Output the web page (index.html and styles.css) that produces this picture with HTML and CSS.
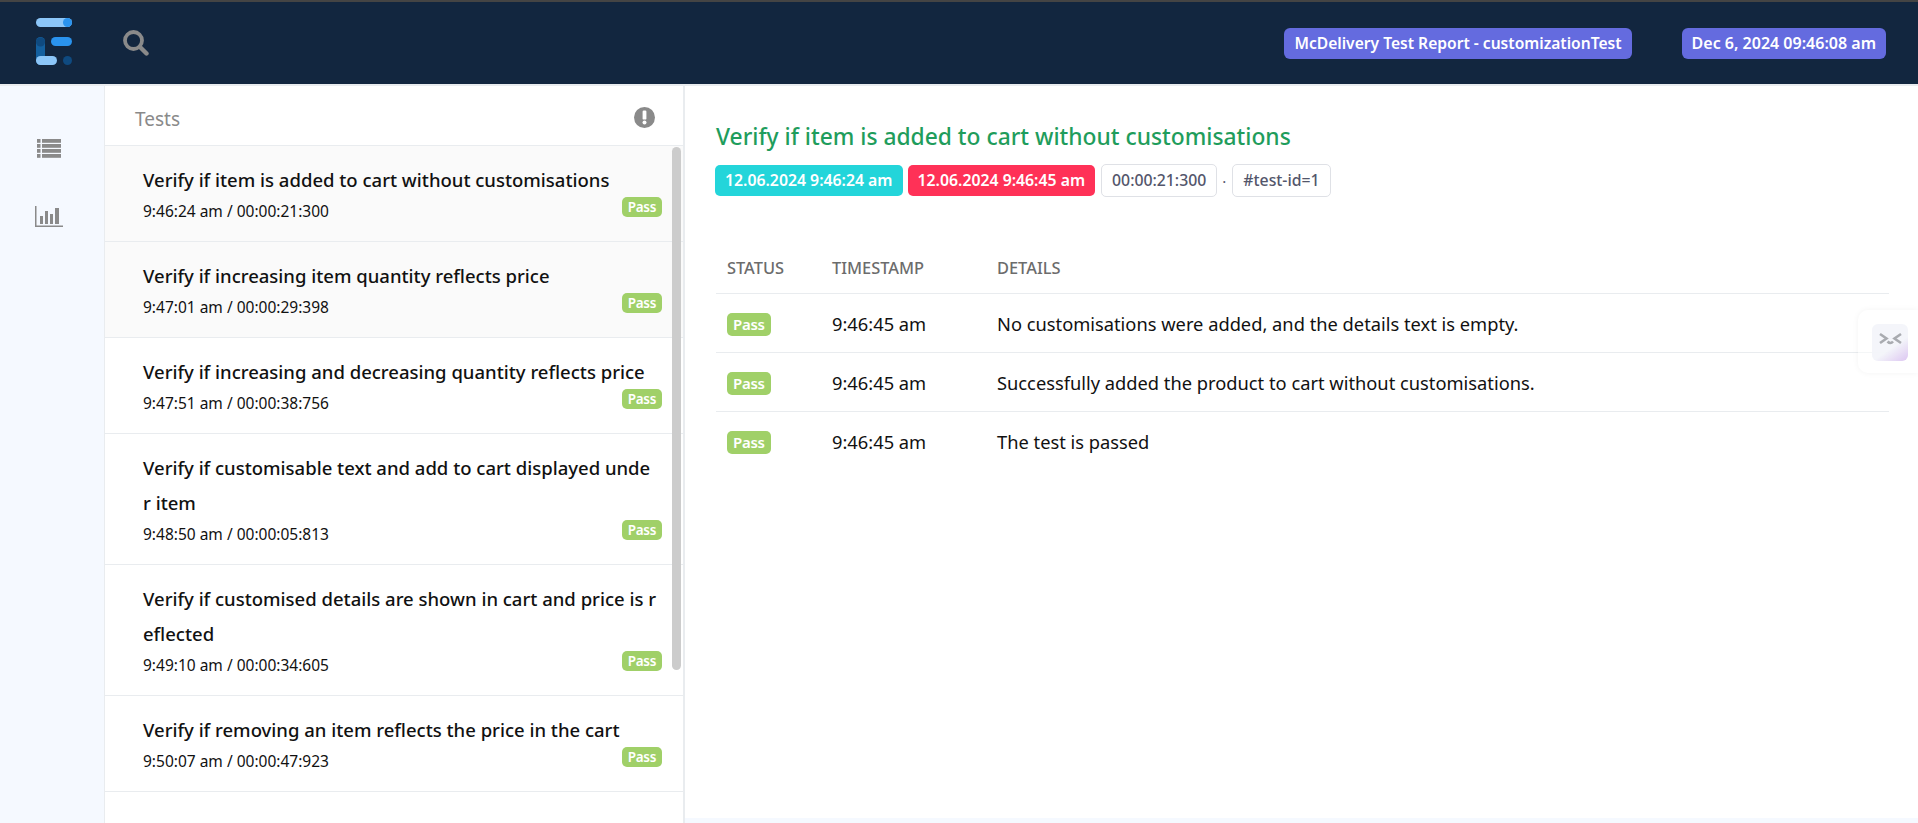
FILE: index.html
```html
<!DOCTYPE html>
<html>
<head>
<meta charset="utf-8">
<link rel="stylesheet" href="styles.css">
<title>McDelivery Test Report</title>
</head>
<body>
<nav class="topbar">
  <svg class="logo" width="38" height="50" viewBox="0 0 38 50">
    <rect x="0" y="1" width="36" height="9" rx="4.5" fill="#8cc6f8"/>
    <circle cx="31.5" cy="5.5" r="4.5" fill="#2a93ee"/>
    <rect x="0" y="20" width="9" height="28" rx="4.5" fill="#14609f"/>
    <circle cx="4.5" cy="25" r="4.5" fill="#0f4a80"/>
    <rect x="15" y="20" width="21" height="9" rx="4.5" fill="#2a93ee"/>
    <rect x="0" y="39" width="21" height="9" rx="4.5" fill="#8cc6f8"/>
    <circle cx="31.5" cy="43.5" r="4.5" fill="#0f4a80"/>
  </svg>
  <svg class="search" width="26" height="26" viewBox="0 0 26 26" fill="none" stroke="#8a8a8a">
    <circle cx="10.5" cy="10.5" r="8.5" stroke-width="3.8"/>
    <path d="M17 17l6.5 6.5" stroke-width="4.4" stroke-linecap="round"/>
  </svg>
  <div class="topbar-right">
    <span class="nav-badge">McDelivery Test Report - customizationTest</span>
    <span class="nav-badge nav-date">Dec 6, 2024 09:46:08 am</span>
  </div>
</nav>

<div class="main">
  <aside class="side">
    <svg width="24" height="19" viewBox="0 0 24 19" fill="#8a8a8a">
      <rect x="0" y="0" width="3.5" height="3.8"/><rect x="5" y="0" width="19" height="3.8"/>
      <rect x="0" y="5" width="3.5" height="3.8"/><rect x="5" y="5" width="19" height="3.8"/>
      <rect x="0" y="10" width="3.5" height="3.8"/><rect x="5" y="10" width="19" height="3.8"/>
      <rect x="0" y="15" width="3.5" height="3.8"/><rect x="5" y="15" width="19" height="3.8"/>
    </svg>
    <svg width="28" height="21" viewBox="0 0 28 21" fill="#8a8a8a">
      <rect x="0" y="0" width="1.5" height="21"/><rect x="0" y="19.5" width="28" height="1.5"/>
      <rect x="5" y="10" width="3" height="8"/><rect x="10" y="5" width="3" height="13"/>
      <rect x="15" y="8" width="3" height="10"/><rect x="20" y="2" width="4" height="16"/>
    </svg>
  </aside>

  <section class="tests">
    <header class="tests-head">
      <span class="tests-label">Tests</span>
      <svg width="21" height="21" viewBox="0 0 21 21">
        <circle cx="10.5" cy="10.5" r="10.5" fill="#8a8a8a"/>
        <rect x="8.6" y="3.6" width="3.8" height="9" rx="1.2" fill="#fff"/>
        <circle cx="10.5" cy="15.6" r="2" fill="#fff"/>
      </svg>
    </header>
    <ul class="test-list">
      <li class="test-item seen">
        <p class="test-name">Verify if item is added to cart without customisations</p>
        <p class="test-time">9:46:24 am / 00:00:21:300</p>
        <span class="pass">Pass</span>
      </li>
      <li class="test-item seen">
        <p class="test-name">Verify if increasing item quantity reflects price</p>
        <p class="test-time">9:47:01 am / 00:00:29:398</p>
        <span class="pass">Pass</span>
      </li>
      <li class="test-item">
        <p class="test-name">Verify if increasing and decreasing quantity reflects price</p>
        <p class="test-time">9:47:51 am / 00:00:38:756</p>
        <span class="pass">Pass</span>
      </li>
      <li class="test-item">
        <p class="test-name">Verify if customisable text and add to cart displayed under item</p>
        <p class="test-time">9:48:50 am / 00:00:05:813</p>
        <span class="pass">Pass</span>
      </li>
      <li class="test-item">
        <p class="test-name">Verify if customised details are shown in cart and price is reflected</p>
        <p class="test-time">9:49:10 am / 00:00:34:605</p>
        <span class="pass">Pass</span>
      </li>
      <li class="test-item">
        <p class="test-name">Verify if removing an item reflects the price in the cart</p>
        <p class="test-time">9:50:07 am / 00:00:47:923</p>
        <span class="pass">Pass</span>
      </li>
    </ul>
    <div class="scroll-thumb"></div>
  </section>

  <section class="detail">
    <div class="detail-inner">
      <h1 class="detail-title">Verify if item is added to cart without customisations</h1>
      <div class="detail-tags">
        <span class="tag tag-start">12.06.2024 9:46:24 am</span>
        <span class="tag tag-end">12.06.2024 9:46:45 am</span>
        <span class="tag tag-line">00:00:21:300</span>
        <span class="dot">·</span>
        <span class="tag tag-line">#test-id=1</span>
      </div>
      <table class="log">
        <thead>
          <tr><th class="col-status">Status</th><th class="col-time">Timestamp</th><th>Details</th></tr>
        </thead>
        <tbody>
          <tr><td><span class="pass">Pass</span></td><td>9:46:45 am</td><td>No customisations were added, and the details text is empty.</td></tr>
          <tr><td><span class="pass">Pass</span></td><td>9:46:45 am</td><td>Successfully added the product to cart without customisations.</td></tr>
          <tr><td><span class="pass">Pass</span></td><td>9:46:45 am</td><td>The test is passed</td></tr>
        </tbody>
      </table>
    </div>
    <div class="float-card">
      <div class="float-face">
        <svg width="36" height="36" viewBox="0 0 36 36" fill="none" stroke="#a0a2a8" stroke-width="2.6">
          <path d="M8 10l6.5 4.5L8 19"/><path d="M29 10l-6.5 4.5L29 19"/><path d="M15.5 17.5q3 3 5.5 0"/>
        </svg>
      </div>
    </div>
  </section>
</div>
</body>
</html>
```

FILE: styles.css
```css
* { box-sizing: border-box; }

html, body {
  margin: 0;
  height: 100%;
  overflow: hidden;
}

body {
  display: flex;
  flex-direction: column;
  font-family: "Noto Sans", "Open Sans", sans-serif;
  color: #111;
  background: #f5f9ff;
}

p { margin: 0; }

.topbar {
  flex: none;
  height: 86px;
  display: flex;
  align-items: center;
  padding: 0 32px 0 36px;
  background: #12263f;
  border-top: 2px solid #444;
  border-bottom: 2px solid #e9ecef;
}

.logo {
  margin: -3px 49px 0 0;
}

.topbar-right {
  margin-left: auto;
  display: flex;
  gap: 50px;
}

.nav-badge {
  height: 31px;
  line-height: 30px;
  padding: 0 10px;
  border-radius: 6px;
  background: #646bdf;
  color: #fff;
  font-size: 15.6px;
  font-weight: 600;
  white-space: nowrap;
}

.nav-date { font-size: 16px; }

.main {
  flex: 1;
  display: flex;
  min-height: 0;
}

.side {
  flex: none;
  width: 105px;
  display: flex;
  flex-direction: column;
  align-items: center;
  gap: 48px;
  padding: 53px 6px 0 0;
  background: #f5f9ff;
  border-right: 1px solid #e9ecef;
}

.tests {
  flex: none;
  position: relative;
  width: 580px;
  overflow: hidden;
  background: #fff;
  border-right: 2px solid #e9ecef;
}

.tests-head {
  height: 60px;
  display: flex;
  align-items: center;
  justify-content: space-between;
  padding: 3px 28px 0 30px;
  border-bottom: 1px solid #e9ecef;
  color: #8a8a8a;
  font-size: 19px;
}

.tests-label { margin-top: 3px; }

.test-list {
  margin: 0;
  padding: 0;
  list-style: none;
}

.test-item {
  position: relative;
  padding: 16px 20px 16px 38px;
  border-bottom: 1px solid #e9ecef;
}

.test-item.seen { background: #fafafa; }

.test-name {
  width: 514px;
  font-size: 18.5px;
  font-weight: 500;
  line-height: 35px;
  word-break: break-all;
}

.test-time {
  font-size: 15.5px;
  line-height: 28px;
}

.pass {
  display: inline-block;
  height: 20px;
  padding: 0 6px;
  border-radius: 5px;
  background: #a0d068;
  color: #fff;
  font-size: 13.5px;
  font-weight: 600;
  line-height: 20px;
  letter-spacing: -0.3px;
}

.test-item .pass {
  position: absolute;
  right: 21px;
  bottom: 24px;
}

.scroll-thumb {
  position: absolute;
  top: 61px;
  left: 567px;
  width: 9px;
  height: 523px;
  border-radius: 5px;
  background: #ccc;
}

.detail {
  flex: 1;
  position: relative;
  height: calc(100% - 5px);
  background: #fff;
  overflow: hidden;
}

.detail-inner { padding: 35px 29px 0 31px; }

.detail-title {
  margin: 0 0 11px;
  color: #1f9d5c;
  font-size: 22.8px;
  font-weight: 500;
  line-height: 32px;
}

.detail-tags {
  display: flex;
  align-items: center;
  gap: 5px;
  height: 33px;
  margin-left: -1px;
}

.tag {
  height: 31px;
  line-height: 31px;
  padding: 0 10px;
  border-radius: 5px;
  font-size: 15.8px;
  font-weight: 600;
  color: #fff;
  white-space: nowrap;
}

.tag-start { background: #23d5da; }
.tag-end { background: #ff3157; }

.tag-line {
  height: 33px;
  line-height: 31px;
  margin-left: 1px;
  color: #53566b;
  font-weight: 500;
  background: #fff;
  border: 1px solid #dfe1e6;
}

.dot { color: #53566b; font-size: 15px; }

.log {
  width: 100%;
  margin-top: 38px;
  border-collapse: collapse;
  font-size: 18.3px;
}

.log th {
  height: 58px;
  padding: 7px 11px 0;
  text-align: left;
  color: #6c6c6c;
  font-size: 16.4px;
  font-weight: 500;
  text-transform: uppercase;
  border-bottom: 1px solid #e9ecef;
}

.log td {
  height: 59px;
  padding: 1px 11px 0;
  border-bottom: 1px solid #e9ecef;
}

.log tr:last-child td { border-bottom: 0; }

.log .pass {
  height: 23px;
  margin-top: -1px;
  padding: 0 6px;
  line-height: 23px;
  font-size: 15px;
  vertical-align: middle;
}

.col-status { width: 105px; }
.col-time { width: 165px; }

.float-card {
  position: absolute;
  top: 224px;
  right: 0;
  width: 60px;
  height: 63px;
  padding: 14px 0 0 14px;
  background: rgba(255, 255, 255, 0.5);
  border-radius: 10px 0 0 10px;
  box-shadow: 0 0 6px rgba(0, 0, 0, 0.05);
}

.float-face {
  width: 36px;
  height: 37px;
  border-radius: 6px;
  background: linear-gradient(145deg, #f3f5fa 60%, #d9c0f0);
  opacity: 0.9;
}
```
